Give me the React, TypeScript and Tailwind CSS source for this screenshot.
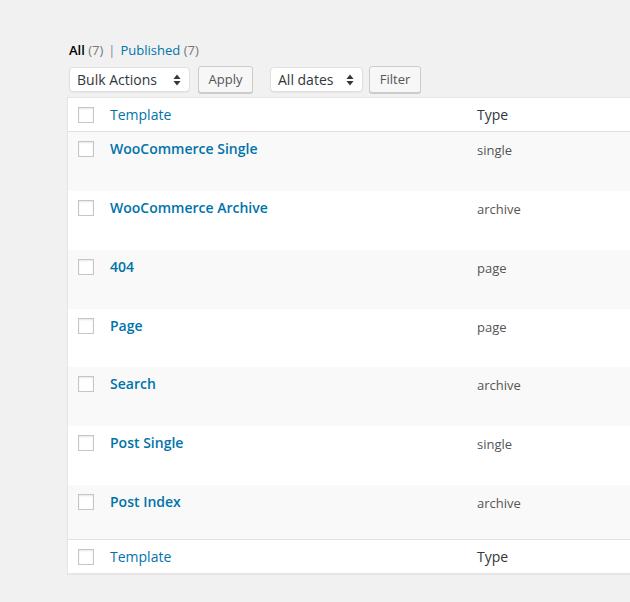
import React from "react";

const rows = [
  { title: "WooCommerce Single", type: "single", h: "h-[59px]" },
  { title: "WooCommerce Archive", type: "archive", h: "h-[59px]" },
  { title: "404", type: "page", h: "h-[59px]" },
  { title: "Page", type: "page", h: "h-[58px]" },
  { title: "Search", type: "archive", h: "h-[59px]" },
  { title: "Post Single", type: "single", h: "h-[59px]" },
  { title: "Post Index", type: "archive", h: "h-[54px]" },
];

function Arrows() {
  return (
    <svg width="8" height="12" viewBox="0 0 8 12" className="shrink-0">
      <path d="M4 0.5 L7.5 5 L0.5 5 Z" fill="#32373c" />
      <path d="M4 11.5 L7.5 7 L0.5 7 Z" fill="#32373c" />
    </svg>
  );
}

function Check() {
  return (
    <div className="w-4 h-4 bg-white border border-[#c3c6ca] shadow-[inset_0_1px_2px_rgba(0,0,0,0.1)] shrink-0" />
  );
}

export default function App() {
  return (
    <div className="w-[630px] h-[602px] bg-[#f1f1f1] overflow-hidden font-['Open_Sans',sans-serif]">
      <div className="pl-[69px] pt-[42px] h-[60px] text-[13px] leading-[16px] text-[#555]">
        <span className="text-black font-semibold">All</span>{" "}
        <span className="text-[#777]">(7)</span>
        <span className="text-[#888] mx-[5px]">|</span>
        <span className="text-[#0073aa]">Published</span>{" "}
        <span className="text-[#777]">(7)</span>
      </div>
      <div className="flex items-center pl-[69px] h-[27px] mt-[6px]">
        <div className="w-[121px] h-[25px] bg-white border border-[#e0e0e0] rounded-[4px] shadow-[0_1px_1px_rgba(0,0,0,0.05)] flex items-center justify-between pl-[7px] pr-[8px] text-[14px] text-[#32373c]">
          <span>Bulk Actions</span>
          <Arrows />
        </div>
        <div className="ml-[8px] w-[55px] h-[27px] bg-[#f7f7f7] border border-[#ccc] rounded-[3px] shadow-[0_1px_0_#ccc] flex items-center justify-center text-[13px] text-[#555]">
          Apply
        </div>
        <div className="ml-[17px] w-[93px] h-[25px] bg-white border border-[#e0e0e0] rounded-[4px] shadow-[0_1px_1px_rgba(0,0,0,0.05)] flex items-center justify-between pl-[7px] pr-[8px] text-[14px] text-[#32373c]">
          <span>All dates</span>
          <Arrows />
        </div>
        <div className="ml-[6px] w-[52px] h-[27px] bg-[#f7f7f7] border border-[#ccc] rounded-[3px] shadow-[0_1px_0_#ccc] flex items-center justify-center text-[13px] text-[#555]">
          Filter
        </div>
      </div>
      <div className="ml-[67px] mt-[4px] w-[620px] border border-[#e5e5e5] bg-white shadow-[0_1px_1px_rgba(0,0,0,0.04)]">
        <div className="flex h-[34px] items-center border-b border-[#e1e1e1]">
          <div className="w-[42px] pl-[10px]"><Check /></div>
          <div className="w-[367px] text-[14px] text-[#0073aa]">Template</div>
          <div className="text-[14px] text-[#32373c]">Type</div>
        </div>
        {rows.map((r, i) => (
          <div
            key={r.title}
            className={`flex items-start ${r.h} pt-[9px] ${i % 2 === 0 ? "bg-[#f9f9f9]" : "bg-white"}`}
          >
            <div className="w-[42px] pl-[10px]"><Check /></div>
            <div className="w-[367px] text-[14px] leading-[16px] font-semibold text-[#0073aa]">{r.title}</div>
            <div className="text-[13px] leading-[16px] text-[#555] pt-[1px]">{r.type}</div>
          </div>
        ))}
        <div className="flex h-[34px] items-center border-t border-[#e1e1e1]">
          <div className="w-[42px] pl-[10px]"><Check /></div>
          <div className="w-[367px] text-[14px] text-[#0073aa]">Template</div>
          <div className="text-[14px] text-[#32373c]">Type</div>
        </div>
      </div>
    </div>
  );
}
